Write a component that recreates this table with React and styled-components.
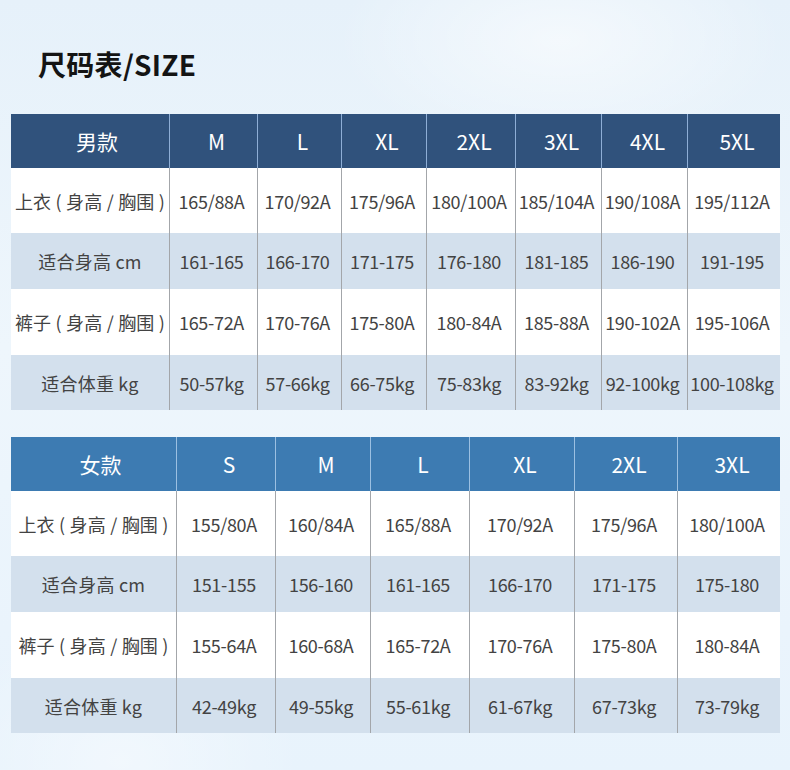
import React from 'react';
import styled, { createGlobalStyle } from 'styled-components';

const GlobalStyle = createGlobalStyle`
  html, body {
    margin: 0;
    padding: 0;
  }
  body {
    width: 790px;
    height: 770px;
    overflow: hidden;
    font-family: "Noto Sans CJK SC", "Noto Sans", sans-serif;
    background: linear-gradient(180deg, #e6f1fa 0%, #eef6fc 45%, #e8f3fc 100%);
  }
`;

const Page = styled.div`
  width: 790px;
  height: 770px;
  box-sizing: border-box;
  padding: 44px 10px 0 11px;
  background:
    radial-gradient(ellipse 320px 160px at 560px 40px, rgba(255,255,255,0.55), rgba(255,255,255,0) 70%),
    radial-gradient(ellipse 260px 200px at 120px 760px, rgba(255,255,255,0.4), rgba(255,255,255,0) 70%);
`;

const Title = styled.h1`
  margin: 0 0 30px 27px;
  height: 40px;
  line-height: 40px;
  font-size: 28px;
  font-weight: 700;
  color: #141414;
  letter-spacing: 0.3px;
`;

const Table = styled.div`
  display: grid;
  grid-template-columns: ${p => p.$cols};
  grid-template-rows: 54px 65px 56px 66px 55px;
  width: 769px;
  margin-bottom: ${p => p.$gap || 0}px;
`;

const HeadCell = styled.div`
  display: flex;
  align-items: center;
  justify-content: center;
  padding-left: ${p => (p.$first ? 14 : 6)}px;
  background: ${p => p.$bg};
  color: #ffffff;
  font-size: 21px;
  font-weight: 400;
  border-left: ${p => (p.$first ? 'none' : `1px solid ${p.$line}`)};
`;

const Cell = styled.div`
  display: flex;
  align-items: center;
  justify-content: center;
  padding-right: ${p => (p.$first ? 0 : 4)}px;
  background: ${p => (p.$shade ? '#d3e0ed' : '#ffffff')};
  color: #434343;
  font-size: 18px;
  font-weight: 400;
  letter-spacing: ${p => (p.$first ? '0.2px' : '-0.3px')};
  white-space: pre;
  border-left: ${p => (p.$first ? 'none' : '1px solid #a3a6aa')};
`;

const menCols = '158px 88px 84px 85px 89px 86px 86px 93px';
const womenCols = '165px 99px 95px 99px 105px 103px 103px';

const men = {
  title: '男款',
  sizes: ['M', 'L', 'XL', '2XL', '3XL', '4XL', '5XL'],
  rows: [
    ['上衣 ( 身高 / 胸围 )', '165/88A', '170/92A', '175/96A', '180/100A', '185/104A', '190/108A', '195/112A'],
    ['适合身高 cm', '161-165', '166-170', '171-175', '176-180', '181-185', '186-190', '191-195'],
    ['裤子 ( 身高 / 胸围 )', '165-72A', '170-76A', '175-80A', '180-84A', '185-88A', '190-102A', '195-106A'],
    ['适合体重 kg', '50-57kg', '57-66kg', '66-75kg', '75-83kg', '83-92kg', '92-100kg', '100-108kg'],
  ],
};

const women = {
  title: '女款',
  sizes: ['S', 'M', 'L', 'XL', '2XL', '3XL'],
  rows: [
    ['上衣 ( 身高 / 胸围 )', '155/80A', '160/84A', '165/88A', '170/92A', '175/96A', '180/100A'],
    ['适合身高 cm', '151-155', '156-160', '161-165', '166-170', '171-175', '175-180'],
    ['裤子 ( 身高 / 胸围 )', '155-64A', '160-68A', '165-72A', '170-76A', '175-80A', '180-84A'],
    ['适合体重 kg', '42-49kg', '49-55kg', '55-61kg', '61-67kg', '67-73kg', '73-79kg'],
  ],
};

function SizeTable({ data, cols, bg, line, gap }) {
  return (
    <Table $cols={cols} $gap={gap}>
      <HeadCell $bg={bg} $line={line} $first>{data.title}</HeadCell>
      {data.sizes.map(s => (
        <HeadCell key={s} $bg={bg} $line={line}>{s}</HeadCell>
      ))}
      {data.rows.map((row, ri) =>
        row.map((v, ci) => (
          <Cell key={ri + '-' + ci} $shade={ri % 2 === 1} $first={ci === 0}>{v}</Cell>
        ))
      )}
    </Table>
  );
}

export default function App() {
  return (
    <>
      <GlobalStyle />
      <Page>
        <Title>尺码表/SIZE</Title>
        <SizeTable data={men} cols={menCols} bg="#30527c" line="#8eaed6" gap={27} />
        <SizeTable data={women} cols={womenCols} bg="#3d7bb2" line="#9cc0e2" />
      </Page>
    </>
  );
}
